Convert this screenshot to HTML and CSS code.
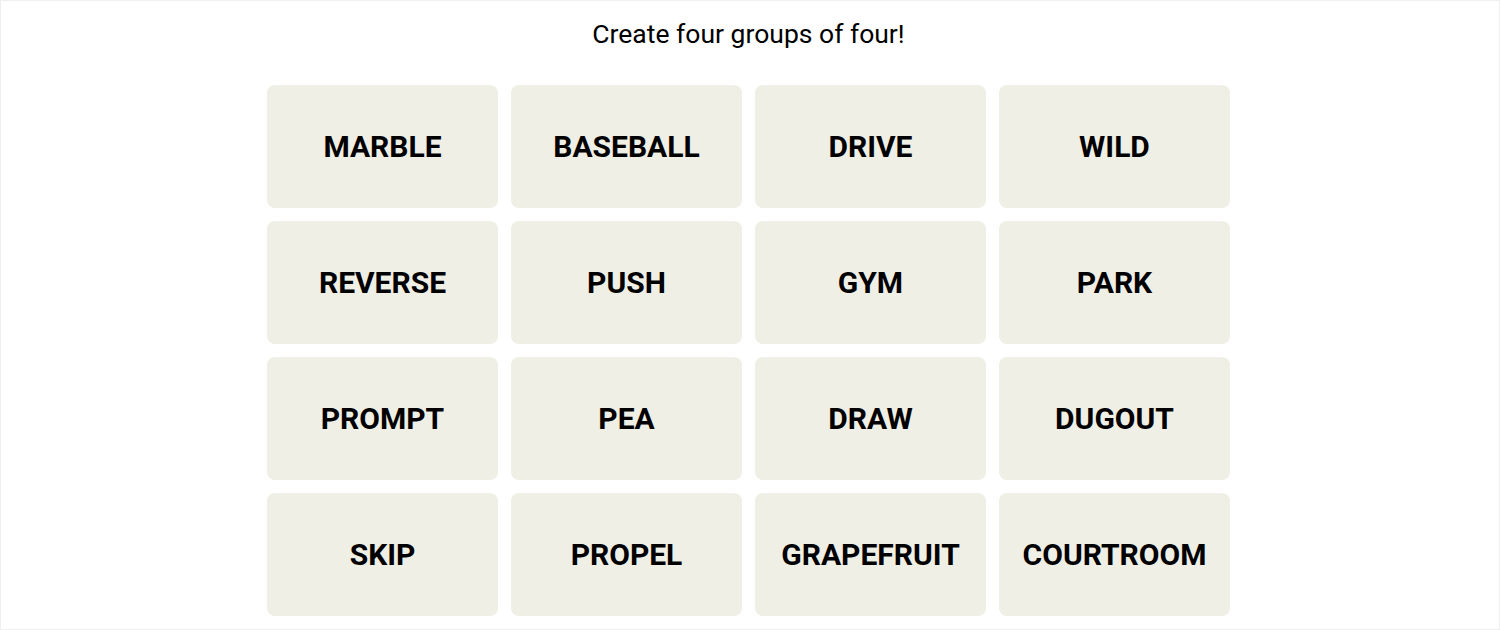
FILE: index.html
```html
<!DOCTYPE html>
<html lang="en">
<head>
    <meta charset="UTF-8">
    <meta name="viewport" content="width=device-width, initial-scale=1.0">
    <title>Connections</title>
    <link rel="stylesheet" href="styles.css">
</head>
<body>

    <div class="page">
        <p class="prompt">Create four groups of four!</p>

        <div class="board">
            <div class="tile">MARBLE</div>
            <div class="tile">BASEBALL</div>
            <div class="tile">DRIVE</div>
            <div class="tile">WILD</div>

            <div class="tile">REVERSE</div>
            <div class="tile">PUSH</div>
            <div class="tile">GYM</div>
            <div class="tile">PARK</div>

            <div class="tile">PROMPT</div>
            <div class="tile">PEA</div>
            <div class="tile">DRAW</div>
            <div class="tile">DUGOUT</div>

            <div class="tile">SKIP</div>
            <div class="tile">PROPEL</div>
            <div class="tile">GRAPEFRUIT</div>
            <div class="tile">COURTROOM</div>
        </div>
    </div>

</body>
</html>
```

FILE: styles.css
```css
body {
    margin: 0;
    background-color: #ffffff;
    font-family: Roboto, "Liberation Sans", sans-serif;
    color: #000;
}
.page {
    height: 630px;
    box-sizing: border-box;
    border: 1px solid #efefef;
    padding-top: 17px;
}
.prompt {
    margin: 0 0 35px 0;
    text-align: center;
    font-size: 26.5px;
    line-height: 32px;
    padding-right: 3px;
}
.board {
    display: grid;
    grid-template-columns: repeat(4, 231px);
    grid-auto-rows: 123px;
    gap: 13px;
    justify-content: center;
    padding-right: 3px;
}
.tile {
    background-color: #efefe6;
    border-radius: 8px;
    display: flex;
    align-items: center;
    justify-content: center;
    font-weight: 700;
    font-size: 30px;
    text-transform: uppercase;
}
```
